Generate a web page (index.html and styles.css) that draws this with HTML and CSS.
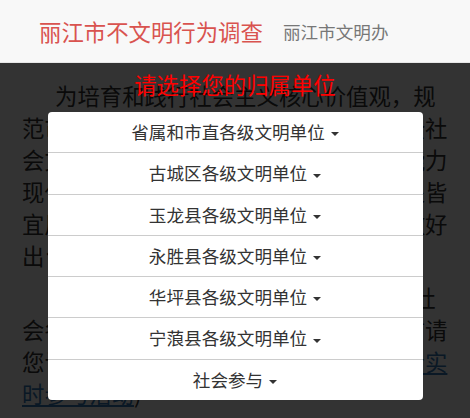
FILE: index.html
```html
<!DOCTYPE html>
<html lang="zh-CN">
<head>
  <meta charset="UTF-8" />
  <meta name="viewport" content="width=device-width, initial-scale=1.0"/>
  <title>丽江市不文明行为调查</title>
  <link rel="stylesheet" href="styles.css">
</head>
<body>

  <nav class="navbar">
    <span class="brand">丽江市不文明行为调查</span>
    <span class="sub">丽江市文明办</span>
  </nav>

  <div class="content">
    <p>为培育和践行社会主义核心价值观，规范市民文明行为，提升城市文明水平和全社会文明程度，推进城市治理体系和治理能力现代化，共建文明城市，让丽江成为处处皆宜居宜业宜游的文明城市，丽江市现已做好出台相关条例的准备工作。</p>
    <p>现面向社会公开征集意见建议，欢迎社会各界人士踊跃参与本次调查，答题之前请您认真阅读说明，再选择归属单位（<a href="#">查看实时参与活动</a>)</p>

    <div class="overlay">
      <h2>请选择您的归属单位</h2>
      <ul class="units">
        <li>省属和市直各级文明单位 <span class="caret"></span></li>
        <li>古城区各级文明单位 <span class="caret"></span></li>
        <li>玉龙县各级文明单位 <span class="caret"></span></li>
        <li>永胜县各级文明单位 <span class="caret"></span></li>
        <li>华坪县各级文明单位 <span class="caret"></span></li>
        <li>宁蒗县各级文明单位 <span class="caret"></span></li>
        <li>社会参与 <span class="caret"></span></li>
      </ul>
    </div>
  </div>

</body>
</html>
```

FILE: styles.css
```css
* {
  box-sizing: border-box;
}

html, body {
  height: 100%;
}

body {
  margin: 0;
  font-family: 'Noto Sans CJK SC', 'Noto Sans', sans-serif;
  font-size: 16px;
  color: #333;
  background: #fff;
  overflow: hidden;
  display: flex;
  flex-direction: column;
}

.navbar {
  height: 63px;
  background: #f8f8f8;
  border-bottom: 1px solid #e7e7e7;
  display: flex;
  align-items: center;
  padding-left: 39px;
  flex-shrink: 0;
}

.brand {
  font-size: 22.4px;
  color: #d9534f;
  margin-right: 20px;
}

.sub {
  font-size: 17.6px;
  color: #777;
}

.content {
  position: relative;
  flex: 1;
  padding: 16px 22px 0;
}

.content p {
  margin: 0 0 10px;
  font-size: 22.4px;
  line-height: 32px;
  text-indent: 33px;
}

.content a {
  color: #337ab7;
  text-decoration: underline;
}

.overlay {
  position: absolute;
  top: 0;
  left: 0;
  right: 0;
  bottom: 0;
  background: rgba(0, 0, 0, 0.8);
  padding-top: 5px;
}

.overlay h2 {
  margin: 0;
  text-align: center;
  font-size: 22.4px;
  line-height: 32px;
  font-weight: normal;
  color: #f00;
}

.units {
  list-style: none;
  margin: 12px auto 0;
  padding: 0;
  width: 375px;
  background: #fff;
  border-radius: 4px;
}

.units li {
  text-align: center;
  font-size: 17.6px;
  line-height: 24.3px;
  padding: 8px 0;
  border-top: 1px solid #ccc;
  color: #333;
}

.units li:first-child {
  border-top: none;
}

.caret {
  display: inline-block;
  width: 0;
  height: 0;
  margin-left: 2px;
  vertical-align: middle;
  border-top: 4px solid #333;
  border-left: 4px solid transparent;
  border-right: 4px solid transparent;
}
```
